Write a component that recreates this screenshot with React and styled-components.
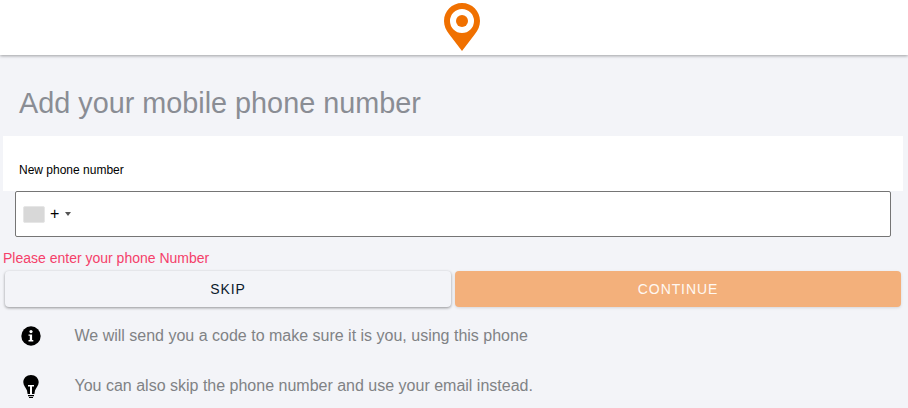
import React from "react";
import styled, { createGlobalStyle } from "styled-components";

const Global = createGlobalStyle`
  html, body { margin: 0; padding: 0; background: #f3f4f8; }
  body { font-family: "Liberation Sans", Arial, sans-serif; width: 908px; height: 408px; overflow: hidden; }
`;
const Header = styled.header`
  height: 55px;
  background: #fff;
  box-shadow: 0 1px 3px rgba(0,0,0,0.35);
  display: flex;
  justify-content: center;
  align-items: flex-start;
  padding: 3px 0 0 16px;
  box-sizing: border-box;
`;
const Title = styled.h1`
  margin: 0;
  padding: 32px 0 0 19px;
  height: 81px;
  box-sizing: border-box;
  font-size: 28.8px;
  line-height: 32px;
  font-weight: 400;
  color: #8a8d94;
`;
const LabelPanel = styled.div`
  margin: 0 5px 0 3px;
  height: 55px;
  background: #fff;
  padding: 27px 0 0 16px;
  box-sizing: border-box;
`;
const Label = styled.label`
  display: block;
  font-size: 12px;
  line-height: 14px;
  color: #000;
`;
const PhoneField = styled.div`
  margin: 0 17px 0 15px;
  height: 46px;
  box-sizing: border-box;
  background: #fff;
  border: 1px solid #757575;
  border-radius: 2px;
  display: flex;
  align-items: center;
  padding-left: 7px;
`;
const Flag = styled.span`
  width: 22px;
  height: 17px;
  box-sizing: border-box;
  background: #d8d8d8;
  border: 1px solid #e6e6e6;
  border-radius: 2px;
`;
const Dial = styled.span`
  margin-left: 5px;
  font-size: 16px;
  line-height: 16px;
  color: #000;
`;
const Caret = styled.span`
  margin-left: 6px;
  width: 0;
  height: 0;
  border-left: 3px solid transparent;
  border-right: 3px solid transparent;
  border-top: 4px solid #555;
`;
const ErrorText = styled.div`
  margin: 13px 0 0 3px;
  height: 16px;
  font-size: 14px;
  line-height: 16px;
  color: #f5406a;
`;
const Buttons = styled.div`
  display: grid;
  grid-template-columns: 446px 446px;
  gap: 4px;
  margin: 5px 0 0 5px;
`;
const Button = styled.button`
  height: 36px;
  border: 0;
  border-radius: 4px;
  font-family: inherit;
  font-size: 14px;
  letter-spacing: 0.9px;
  text-transform: uppercase;
  background: ${p => (p.$primary ? "#f3b07b" : "#f3f4f8")};
  color: ${p => (p.$primary ? "#fff8f2" : "#0b1a2b")};
  box-shadow: ${p => p.$primary
    ? "0 1px 3px rgba(0,0,0,0.12)"
    : "0 1px 3px rgba(0,0,0,0.4)"};
`;
const Tips = styled.ul`
  list-style: none;
  margin: 0;
  padding: 4px 0 0 21px;
`;
const Tip = styled.li`
  display: flex;
  align-items: center;
  height: 50px;
  font-size: 16px;
  color: #808285;
`;
const TipIcon = styled.span`
  width: 53.5px;
  display: flex;
  flex: none;
`;

const Pin = () => (
  <svg width="36" height="48" viewBox="0 0 36 48">
    <path fillRule="evenodd" fill="#f07000" d="M18 0C8 0 0 8 0 18c0 5 2 9 5 13l13 17 13-17c3-4 5-8 5-13C36 8 28 0 18 0zM18 6a12 12 0 1 1 0 24 12 12 0 0 1 0-24z" />
    <circle cx="18" cy="18" r="6" fill="#f07000" />
  </svg>
);
const InfoIcon = () => (
  <svg width="20" height="20" viewBox="0 0 20 20">
    <circle cx="10" cy="10" r="9.7" fill="#000" />
    <circle cx="10" cy="5.6" r="1.6" fill="#fff" />
    <path fill="#fff" d="M7.5 8.400h3.600v5.600h1.200v1.400H7.500V14h1.300V9.800H7.500z" />
  </svg>
);
const BulbIcon = () => (
  <svg width="20" height="24" viewBox="0 0 20 24">
    <path fill="#000" d="M10 1C5.600 1 2.300 4.200 2.300 8.200c0 3.400 2.600 5.200 3.700 8.200l.6 3.600h6.800l.6-3.600c1.100-3 3.700-4.800 3.700-8.200C17.700 4.200 14.400 1 10 1z" />
    <path fill="#fff" d="M7 11h6v1.500h-2V20H9v-7.500H7z" />
    <path fill="#000" d="M7 21h6v1.200H7zM8 23h4v1H8z" />
  </svg>
);

export default function App() {
  return (
    <>
      <Global />
      <Header><Pin /></Header>
      <Title>Add your mobile phone number</Title>
      <LabelPanel><Label>New phone number</Label></LabelPanel>
      <PhoneField>
        <Flag />
        <Dial>+</Dial>
        <Caret />
      </PhoneField>
      <ErrorText>Please enter your phone Number</ErrorText>
      <Buttons>
        <Button>Skip</Button>
        <Button $primary>Continue</Button>
      </Buttons>
      <Tips>
        <Tip><TipIcon><InfoIcon /></TipIcon>We will send you a code to make sure it is you, using this phone</Tip>
        <Tip><TipIcon><BulbIcon /></TipIcon>You can also skip the phone number and use your email instead.</Tip>
      </Tips>
    </>
  );
}
